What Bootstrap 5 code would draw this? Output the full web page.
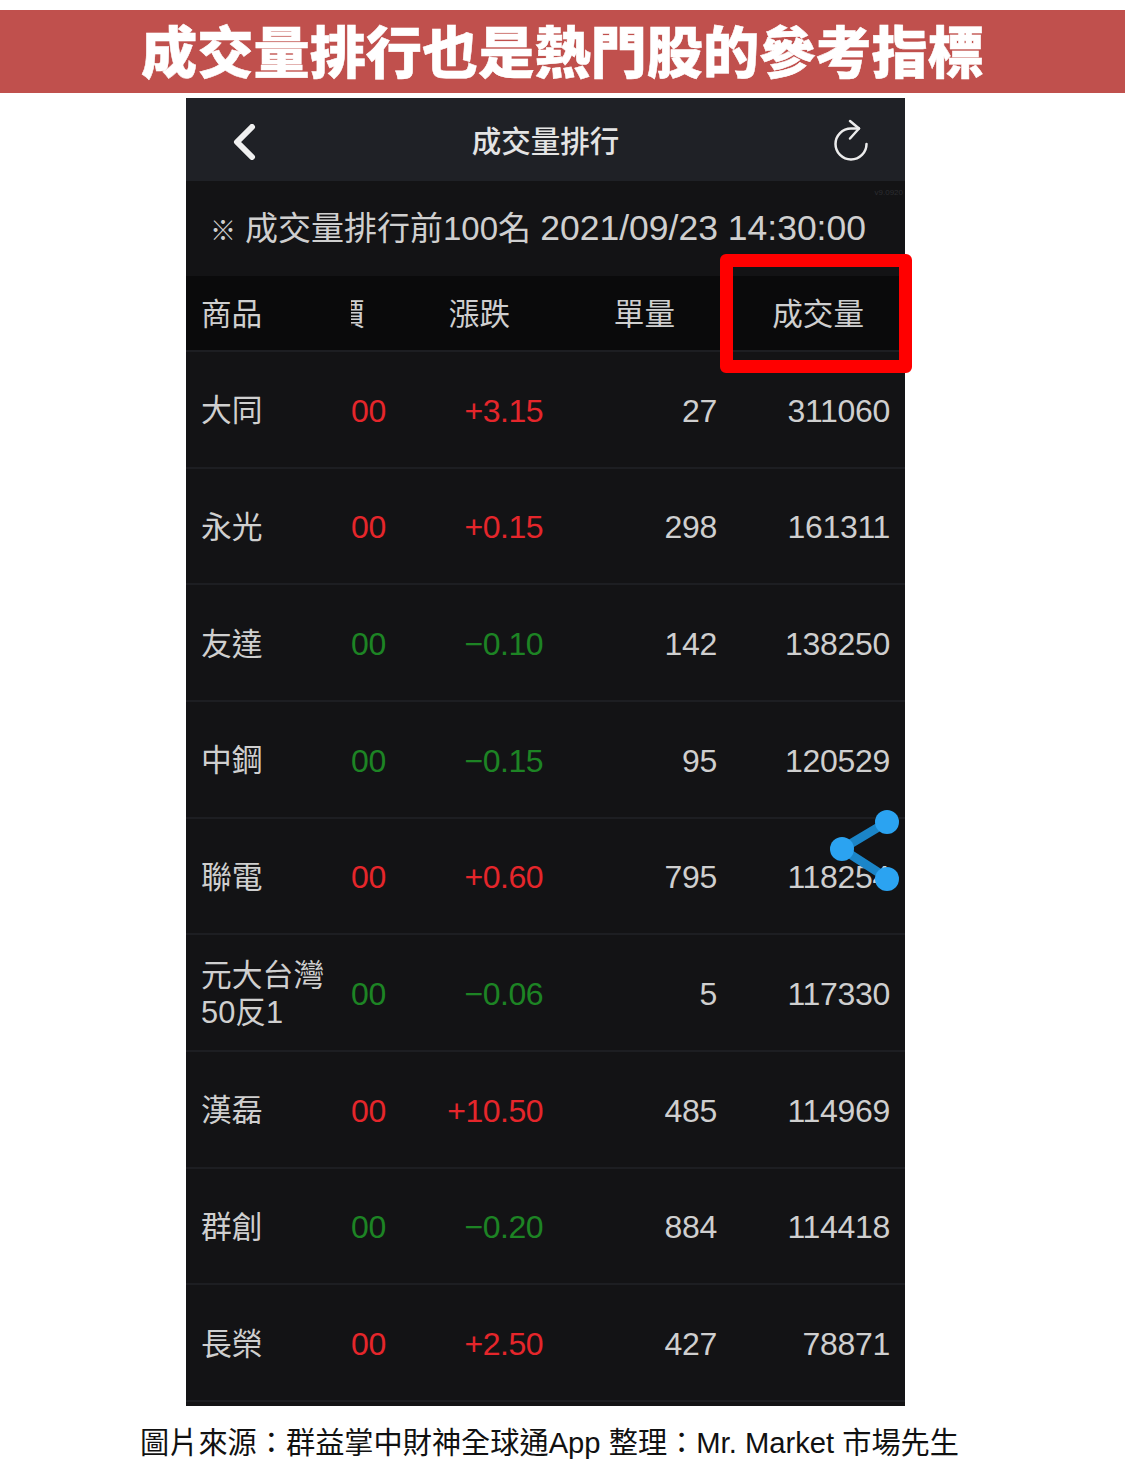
<!DOCTYPE html>
<html lang="zh-Hant">
<head>
  <meta charset="UTF-8" />
  <meta name="viewport" content="width=device-width, initial-scale=1.0" />
  <title>成交量排行</title>
  <link href="https://cdn.jsdelivr.net/npm/bootstrap@5.3.0/dist/css/bootstrap.min.css" rel="stylesheet" />
  <style>
    body {
      font-family: "Liberation Sans", "Noto Sans CJK TC", sans-serif;
      background: #fff;
      padding-top: 10px;
    }
    .title-bar {
      background: #c0504d;
      color: #fff;
      height: 83px;
      font-size: 56.2px;
      font-weight: 900;
      line-height: 87px;
      margin-bottom: 5px;
      -webkit-text-stroke: 0.5px #fff;
    }
    .phone {
      width: 719px;
      margin-left: 186px;
      background: #131315;
      color: #cfcfcf;
    }
    .app-nav {
      height: 83px;
      background: #1f2126;
      color: #e4e4e4;
      font-size: 29.5px;
      font-weight: 500;
      padding: 0 36px 0 46px;
    }
    .app-nav span {
      padding-top: 6px;
    }
    .back-icon {
      margin-top: 4px;
    }
    .notice {
      height: 95px;
      padding-left: 24px;
      font-size: 33px;
      white-space: nowrap;
    }
    .note-mark {
      font-size: 26px;
      margin-right: 9px;
    }
    .note-date {
      font-size: 35.5px;
    }
    .version {
      top: 6px;
      right: 2px;
      font-size: 8px;
      color: #2c2d31;
    }
    .stock-row {
      display: grid;
      grid-template-columns: 150px 60px 132px 174px 173px;
      align-items: center;
      height: 116.67px;
      padding: 3px 15px 0;
      border-bottom: 2px solid #1d1e22;
      font-size: 32px;
      letter-spacing: -0.3px;
    }
    .stock-head {
      height: 76px;
      background: #0a0a0b;
      font-size: 30.6px;
      letter-spacing: 0;
    }
    .head-cut {
      display: block;
      width: 13px;
      overflow: hidden;
    }
    .head-cut span {
      display: block;
      margin-left: -17px;
    }
    .head-change {
      padding-right: 33px;
    }
    .head-single {
      padding-right: 42px;
    }
    .head-volume {
      padding-right: 26px;
    }
    .name-cell {
      font-size: 30.8px;
      line-height: 37px;
      letter-spacing: 0;
    }
    .change-cell {
      letter-spacing: -0.5px;
    }
    .up { color: #e5262b; }
    .down { color: #1d8424; }
    .red-box {
      top: 156px;
      left: 534px;
      width: 192px;
      height: 119px;
      border: 13px solid #f00;
      border-radius: 6px;
    }
    .share-icon {
      top: 712px;
      left: 640px;
    }
    .phone-end {
      height: 4px;
    }
    .source {
      font-size: 29.2px;
      color: #111;
      margin-top: 16px;
      padding-right: 26px;
      white-space: nowrap;
    }
  </style>
</head>
<body>
  <div class="title-bar text-center">成交量排行也是熱門股的參考指標</div>

  <div class="phone position-relative">
    <div class="app-nav d-flex align-items-center justify-content-between">
      <svg class="back-icon" width="26" height="36" viewBox="0 0 26 36" fill="none" stroke="#f0f0f0" stroke-width="6" stroke-linecap="round" stroke-linejoin="round"><path d="M20 3 5 18l15 15" /></svg>
      <span>成交量排行</span>
      <svg width="36" height="44" viewBox="0 0 36 44" fill="none" stroke="#ececec" stroke-width="2.5" stroke-linecap="round" stroke-linejoin="round"><path d="M26 10.500H18A15.500 15.500 0 1 0 33.500 26" /><path d="M17 3l9 7.500-9 10" /></svg>
    </div>
    <div class="notice position-relative d-flex align-items-center">
      <span class="version position-absolute">v9.0920</span>
      <div><span class="note-mark">※</span>成交量排行前100名 <span class="note-date">2021/09/23 14:30:00</span></div>
    </div>

    <div class="stock-row stock-head">
      <div>商品</div>
      <div><span class="head-cut"><span>價</span></span></div>
      <div class="text-end head-change">漲跌</div>
      <div class="text-end head-single">單量</div>
      <div class="text-end head-volume">成交量</div>
    </div>

    <div class="stock-row"><div class="name-cell">大同</div><div class="up">00</div><div class="up text-end change-cell">+3.15</div><div class="text-end">27</div><div class="text-end">311060</div></div>
    <div class="stock-row"><div class="name-cell">永光</div><div class="up">00</div><div class="up text-end change-cell">+0.15</div><div class="text-end">298</div><div class="text-end">161311</div></div>
    <div class="stock-row"><div class="name-cell">友達</div><div class="down">00</div><div class="down text-end change-cell">−0.10</div><div class="text-end">142</div><div class="text-end">138250</div></div>
    <div class="stock-row"><div class="name-cell">中鋼</div><div class="down">00</div><div class="down text-end change-cell">−0.15</div><div class="text-end">95</div><div class="text-end">120529</div></div>
    <div class="stock-row"><div class="name-cell">聯電</div><div class="up">00</div><div class="up text-end change-cell">+0.60</div><div class="text-end">795</div><div class="text-end">118254</div></div>
    <div class="stock-row"><div class="name-cell">元大台灣<br />50反1</div><div class="down">00</div><div class="down text-end change-cell">−0.06</div><div class="text-end">5</div><div class="text-end">117330</div></div>
    <div class="stock-row"><div class="name-cell">漢磊</div><div class="up">00</div><div class="up text-end change-cell">+10.50</div><div class="text-end">485</div><div class="text-end">114969</div></div>
    <div class="stock-row"><div class="name-cell">群創</div><div class="down">00</div><div class="down text-end change-cell">−0.20</div><div class="text-end">884</div><div class="text-end">114418</div></div>
    <div class="stock-row"><div class="name-cell">長榮</div><div class="up">00</div><div class="up text-end change-cell">+2.50</div><div class="text-end">427</div><div class="text-end">78871</div></div>
    <div class="phone-end"></div>

    <div class="red-box position-absolute"></div>
    <svg class="share-icon position-absolute" width="76" height="84" viewBox="0 0 76 84">
      <path d="M61 12 16 39l45 29" fill="none" stroke="#1b85c8" stroke-width="9" />
      <circle cx="61" cy="12" r="12" fill="#2ba3f1" />
      <circle cx="16" cy="39" r="12" fill="#2ba3f1" />
      <circle cx="61" cy="69" r="12" fill="#2ba3f1" />
    </svg>
  </div>

  <div class="source text-center">圖片來源：群益掌中財神全球通App 整理：Mr. Market 市場先生</div>

  <script src="https://cdn.jsdelivr.net/npm/bootstrap@5.3.0/dist/js/bootstrap.bundle.min.js"></script>
</body>
</html>
